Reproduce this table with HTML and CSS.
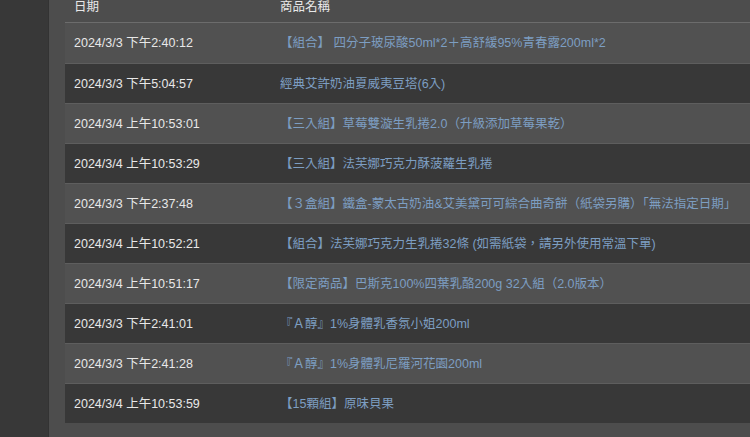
FILE: index.html
```html
<!DOCTYPE html>
<html lang="zh-Hant">
<head>
<meta charset="utf-8">
<link rel="stylesheet" href="styles.css">
</head>
<body>
<div class="layout">
  <aside class="side"></aside>
  <main class="main">
    <table class="orders">
      <thead>
        <tr><th class="c-date">日期</th><th class="c-name">商品名稱</th></tr>
      </thead>
      <tbody>
        <tr class="light"><td class="c-date">2024/3/3 下午2:40:12</td><td class="c-name">【組合】 四分子玻尿酸50ml*2＋高舒緩95%青春露200ml*2</td></tr>
        <tr class="dark"><td class="c-date">2024/3/3 下午5:04:57</td><td class="c-name">經典艾許奶油夏威夷豆塔(6入)</td></tr>
        <tr class="light"><td class="c-date">2024/3/4 上午10:53:01</td><td class="c-name">【三入組】草莓雙漩生乳捲2.0（升級添加草莓果乾）</td></tr>
        <tr class="dark"><td class="c-date">2024/3/4 上午10:53:29</td><td class="c-name">【三入組】法芙娜巧克力酥菠蘿生乳捲</td></tr>
        <tr class="light"><td class="c-date">2024/3/3 下午2:37:48</td><td class="c-name">【３盒組】鐵盒-蒙太古奶油&amp;艾美黛可可綜合曲奇餅（紙袋另購）「無法指定日期」</td></tr>
        <tr class="dark"><td class="c-date">2024/3/4 上午10:52:21</td><td class="c-name">【組合】法芙娜巧克力生乳捲32條 (如需紙袋，請另外使用常溫下單)</td></tr>
        <tr class="light"><td class="c-date">2024/3/4 上午10:51:17</td><td class="c-name">【限定商品】巴斯克100%四葉乳酪200g 32入組（2.0版本）</td></tr>
        <tr class="dark"><td class="c-date">2024/3/3 下午2:41:01</td><td class="c-name">『Ａ醇』1%身體乳香氛小姐200ml</td></tr>
        <tr class="light"><td class="c-date">2024/3/3 下午2:41:28</td><td class="c-name">『Ａ醇』1%身體乳尼羅河花園200ml</td></tr>
        <tr class="dark"><td class="c-date">2024/3/4 上午10:53:59</td><td class="c-name">【15顆組】原味貝果</td></tr>
      </tbody>
    </table>
  </main>
</div>
</body>
</html>
```

FILE: styles.css
```css
html, body {
  margin: 0;
  padding: 0;
  background: #4d4d4d;
  width: 750px;
  height: 437px;
  overflow: hidden;
}
body {
  font-family: "Liberation Sans", "Noto Sans CJK TC", sans-serif;
  font-size: 12.5px;
  color: #e8e8e8;
}
.layout {
  display: flex;
  height: 437px;
}
.side {
  width: 48px;
  flex: none;
  background: #383838;
  border-right: 1px solid #333333;
}
.main {
  flex: 1;
  padding-left: 16px;
  overflow: hidden;
}
.orders {
  border-collapse: collapse;
  width: 760px;
  table-layout: fixed;
}
.orders th {
  font-weight: normal;
  text-align: left;
  line-height: 14px;
  padding: 0 9px 8px;
  color: #e8e8e8;
  border-bottom: 1px solid #6c6c6c;
}
.orders td {
  height: 39px;
  padding: 0 9px;
  line-height: 14px;
  white-space: nowrap;
  border-top: 1px solid #5e5e5e;
}
.orders tbody tr:first-child td {
  border-top: none;
  height: 40px;
}
.c-date {
  width: 188px;
}
.orders td.c-name {
  color: #7d9ec2;
}
.light {
  background: #515151;
}
.dark {
  background: #383838;
}
```
